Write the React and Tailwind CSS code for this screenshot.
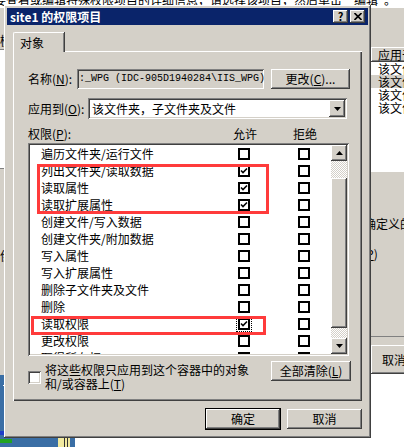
import React from 'react';

const raised =
  'bg-[#d4d0c8] shadow-[inset_-1px_-1px_#404040,inset_1px_1px_#ffffff,inset_-2px_-2px_#808080,inset_2px_2px_#d4d0c8]';
const sunken =
  'shadow-[inset_1px_1px_#808080,inset_-1px_-1px_#ffffff,inset_2px_2px_#404040,inset_-2px_-2px_#d4d0c8]';

const rows = [
  { label: '遍历文件夹/运行文件' },
  { label: '列出文件夹/读取数据', allow: true },
  { label: '读取属性', allow: true },
  { label: '读取扩展属性', allow: true },
  { label: '创建文件/写入数据' },
  { label: '创建文件夹/附加数据' },
  { label: '写入属性' },
  { label: '写入扩展属性' },
  { label: '删除子文件夹及文件' },
  { label: '删除' },
  { label: '读取权限', allow: true, focus: true },
  { label: '更改权限' },
  { label: '取得所有权' },
];

const Arrow = ({ up }) => (
  <svg width="7" height="4" viewBox="0 0 7 4">
    <polygon points={up ? '3.5,0 7,4 0,4' : '0,0 7,0 3.5,4'} fill="#000" />
  </svg>
);

const Box = ({ checked, focus }) => (
  <span
    className={`flex h-[12px] w-[12px] shrink-0 items-center justify-center border-2 border-black bg-white ${
      focus ? 'outline outline-1 outline-offset-1 outline-dotted outline-black' : ''
    }`}
  >
    {checked && (
      <svg width="8" height="8" viewBox="0 0 8 8">
        <path d="M1 3.5 L3 5.5 L7 1.5" stroke="#000" strokeWidth="1.6" fill="none" />
      </svg>
    )}
  </span>
);

const Button = ({ children, className = '' }) => (
  <div className={`flex items-center justify-center ${raised} ${className}`}>{children}</div>
);

export default function App() {
  return (
    <div className="relative h-[447px] w-[404px] overflow-hidden bg-white font-['Noto_Sans_CJK_SC','Noto_Sans',sans-serif] text-[12px] leading-[14px] text-black">
      {/* background: top line of a text page */}
      <div className="absolute right-[8px] top-[-7px] whitespace-nowrap">
        要查看或编辑特殊权限项目的详细信息，请选择该项目，然后单击“编辑”。
      </div>

      {/* background window, left strip */}
      <div className="absolute left-0 top-[8px] h-[367px] w-[8px] overflow-hidden bg-[#d4d0c8]">
        <div className="mt-[26px] text-[12px]">梃</div>
        <div className="mt-[1px] h-[120px] w-full border-y border-[#808080] bg-white" />
        <div className="mt-[80px] text-[12px]">侩</div>
      </div>
      <div className="absolute left-0 top-[375px] h-[72px] w-[75px] bg-[#3a6ea5]">
        <div className="absolute left-[3px] top-[10px] h-[1px] w-[1px] bg-white" />
        <div className="absolute bottom-[12px] left-0 h-[4px] w-[12px] bg-[#1e3cc8]" />
        <div className="absolute bottom-[4px] left-0 h-[4px] w-[12px] bg-[#21a321]" />
        <div className="absolute bottom-0 left-[58px] h-[10px] w-[12px] bg-[#f2eaa0]">
          <div className="ml-[6px] h-full w-[4px] border-x border-[#333]" />
        </div>
      </div>

      {/* background window, right strip */}
      <div className="absolute left-[366px] top-[8px] h-[366px] w-[38px] overflow-hidden whitespace-nowrap bg-[#d4d0c8]">
        <div className={`absolute left-[5px] top-[39px] h-[15px] w-[40px] overflow-hidden pl-[7px] leading-[15px] ${raised}`}>
          应用于
        </div>
        <div className="absolute left-[5px] top-[54px] h-[110px] w-[40px] overflow-hidden bg-white">
          <div className="h-[13px] pl-[7px] leading-[13px]">该文件夹</div>
          <div className="h-[13px] bg-[#d4d0c8] pl-[7px] leading-[13px]">该文件夹</div>
          <div className="h-[13px] pl-[7px] leading-[13px]">该文件夹</div>
          <div className="h-[13px] pl-[7px] leading-[13px]">该文件夹</div>
        </div>
        <div className="absolute left-[-2px] top-[209px]">确定义的</div>
        <div className="absolute left-[-4px] top-[239px]">
          (<u>P</u>)
        </div>
        <div className="absolute left-0 top-[328px] h-[2px] w-full border-t border-[#808080] border-b-white" />
        <div className={`absolute left-[5px] top-[337px] h-[29px] w-[50px] pl-[11px] leading-[29px] ${raised}`}>
          取消
        </div>
      </div>

      {/* dialog */}
      <div
        className={`absolute left-[4px] top-[5px] flex h-[433px] w-[367px] flex-col p-[3px] ${raised}`}
      >
        {/* title bar */}
        <div className="flex h-[17px] shrink-0 items-center justify-between bg-[#0a246a] pl-[3px] pr-[3px]">
          <span className="font-bold text-white">site1 的权限项目</span>
          <div className="flex gap-[2px]">
            <Button className="h-[13px] w-[15px] text-[11px] font-bold leading-[13px]">?</Button>
            <Button className="h-[13px] w-[15px]">
              <svg width="8" height="7" viewBox="0 0 8 7">
                <path d="M0.5 0 L7.5 7 M7.5 0 L0.5 7" stroke="#000" strokeWidth="1.6" />
              </svg>
            </Button>
          </div>
        </div>

        {/* tab */}
        <div className="relative z-10 ml-[6px] mt-[7px] -mb-[1px] flex h-[20px] w-[51px] items-center rounded-tl-[2px] border-l border-t border-white bg-[#d4d0c8] pl-[6px] shadow-[inset_-1px_0_#808080,1px_0_#404040]">
          对象
        </div>

        {/* tab panel */}
        <div className="ml-[6px] flex h-[350px] w-[349px] flex-col bg-[#d4d0c8] pl-[15px] pt-[18px] shadow-[inset_1px_1px_#ffffff,inset_-1px_-1px_#404040,inset_-2px_-2px_#808080]">
          <div className="flex h-[20px] items-center">
            <span className="w-[49px]">
              名称(<u>N</u>):
            </span>
            <div
              className={`flex h-[20px] w-[187px] items-center overflow-hidden whitespace-nowrap bg-[#d4d0c8] pl-[2px] font-['Liberation_Mono',monospace] text-[10px] ${sunken}`}
            >
              :_WPG (IDC-905D1940284\IIS_WPG)
            </div>
            <Button className="ml-[7px] h-[20px] w-[79px]">
              更改(<u>C</u>)...
            </Button>
          </div>

          <div className="mt-[9px] flex h-[21px] items-center">
            <span className="w-[60px]">
              应用到(<u>O</u>):
            </span>
            <div className={`flex h-[21px] w-[259px] items-center justify-between bg-white p-[2px] ${sunken}`}>
              <span className="pl-[2px]">该文件夹，子文件夹及文件</span>
              <Button className="h-[17px] w-[16px]">
                <Arrow />
              </Button>
            </div>
          </div>

          <div className="mt-[8px] flex h-[14px] items-center">
            <span className="w-[205px]">
              权限(<u>P</u>):
            </span>
            <span className="w-[60px]">允许</span>
            <span>拒绝</span>
          </div>

          {/* permission list */}
          <div className={`relative mt-[2px] flex h-[213px] w-[321px] bg-white p-[2px] ${sunken}`}>
            <div className="flex-1 overflow-hidden">
              {rows.map((r) => (
                <div key={r.label} className="flex h-[17px] items-center">
                  <span className="w-[208px] pl-[11px]">{r.label}</span>
                  <Box checked={r.allow} focus={r.focus} />
                  <span className="w-[48px]" />
                  <Box />
                </div>
              ))}
            </div>
            <div className="flex w-[16px] flex-col">
              <Button className="h-[16px]">
                <Arrow up />
              </Button>
              <div className="h-[17px] bg-[repeating-conic-gradient(#ffffff_0%_25%,#d4d0c8_0%_50%)] bg-[length:2px_2px]" />
              <div className={`h-[150px] ${raised}`} />
              <div className="h-[10px] bg-[repeating-conic-gradient(#ffffff_0%_25%,#d4d0c8_0%_50%)] bg-[length:2px_2px]" />
              <Button className="h-[16px]">
                <Arrow />
              </Button>
            </div>

            {/* red annotation boxes */}
            <div className="absolute left-[9px] top-[21px] h-[50px] w-[232px] border-[3px] border-[#ff3b3b]" />
            <div className="absolute left-[3px] top-[173px] h-[19px] w-[235px] border-[3px] border-[#ff3b3b]" />
          </div>

          <div className="mt-[5px] flex w-[323px] items-start justify-between">
            <div className="flex items-start">
              <span className={`mt-[10px] h-[13px] w-[13px] bg-white ${sunken}`} />
              <div className="ml-[4px] mt-[2px] leading-[14px]">
                <div>将这些权限只应用到这个容器中的对象</div>
                <div>
                  和/或容器上(<u>T</u>)
                </div>
              </div>
            </div>
            <Button className="h-[20px] w-[80px]">
              全部清除(<u>L</u>)
            </Button>
          </div>
        </div>

        {/* dialog buttons */}
        <div className="ml-[6px] mt-[7px] flex w-[349px] justify-end gap-[6px]">
          <div className="border border-black">
            <Button className="h-[20px] w-[74px]">确定</Button>
          </div>
          <Button className="mt-[1px] h-[20px] w-[75px]">取消</Button>
        </div>
      </div>
    </div>
  );
}
